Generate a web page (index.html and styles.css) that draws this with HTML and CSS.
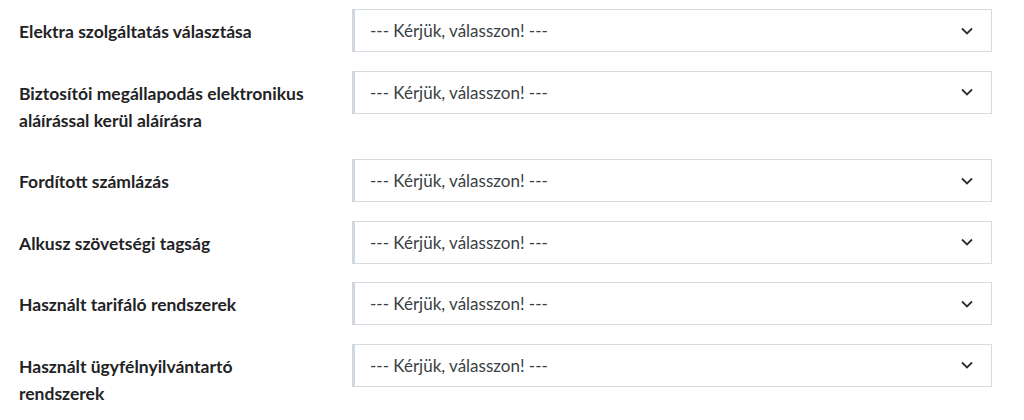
FILE: index.html
```html
<!DOCTYPE html>
<html lang="hu">
<head>
  <meta charset="UTF-8" />
  <meta name="viewport" content="width=device-width, initial-scale=1.0" />
  <title>Beállítások</title>
  <link rel="stylesheet" href="styles.css">
</head>
<body>
  <form class="settings">
    <div class="row">
      <label class="label">Elektra szolgáltatás választása</label>
      <div class="select"><span>--- Kérjük, válasszon! ---</span><svg class="chev" width="12" height="8" viewBox="0 0 12 8"><path d="M1 1.5l5 5 5-5" fill="none" stroke="#2b2f33" stroke-width="1.8"/></svg></div>
    </div>
    <div class="row">
      <label class="label">Biztosítói megállapodás elektronikus aláírással kerül aláírásra</label>
      <div class="select"><span>--- Kérjük, válasszon! ---</span><svg class="chev" width="12" height="8" viewBox="0 0 12 8"><path d="M1 1.5l5 5 5-5" fill="none" stroke="#2b2f33" stroke-width="1.8"/></svg></div>
    </div>
    <div class="row">
      <label class="label">Fordított számlázás</label>
      <div class="select"><span>--- Kérjük, válasszon! ---</span><svg class="chev" width="12" height="8" viewBox="0 0 12 8"><path d="M1 1.5l5 5 5-5" fill="none" stroke="#2b2f33" stroke-width="1.8"/></svg></div>
    </div>
    <div class="row">
      <label class="label">Alkusz szövetségi tagság</label>
      <div class="select"><span>--- Kérjük, válasszon! ---</span><svg class="chev" width="12" height="8" viewBox="0 0 12 8"><path d="M1 1.5l5 5 5-5" fill="none" stroke="#2b2f33" stroke-width="1.8"/></svg></div>
    </div>
    <div class="row">
      <label class="label">Használt tarifáló rendszerek</label>
      <div class="select"><span>--- Kérjük, válasszon! ---</span><svg class="chev" width="12" height="8" viewBox="0 0 12 8"><path d="M1 1.5l5 5 5-5" fill="none" stroke="#2b2f33" stroke-width="1.8"/></svg></div>
    </div>
    <div class="row">
      <label class="label">Használt ügyfélnyilvántartó rendszerek</label>
      <div class="select"><span>--- Kérjük, válasszon! ---</span><svg class="chev" width="12" height="8" viewBox="0 0 12 8"><path d="M1 1.5l5 5 5-5" fill="none" stroke="#2b2f33" stroke-width="1.8"/></svg></div>
    </div>
  </form>
</body>
</html>
```

FILE: styles.css
```css
body {
  margin: 0;
  padding: 9px 32px 0 19px;
  background: #fff;
  font-family: Lato, 'Noto Sans', sans-serif;
  color: #212529;
}

.settings {
  display: flex;
  flex-direction: column;
  gap: 16.5px;
}

.row {
  display: grid;
  grid-template-columns: 333px 1fr;
  align-items: start;
}

.label {
  padding: 9px 37px 9px 0;
  font-size: 17.5px;
  font-weight: 700;
  line-height: 27px;
  color: #1f2326;
}

.select {
  display: flex;
  align-items: center;
  justify-content: space-between;
  height: 43px;
  box-sizing: border-box;
  padding: 0 18px 0 15px;
  border: 1px solid #d5dbe1;
  border-left: 3px solid #d0d7df;
  font-size: 17px;
  color: #3a3f44;
}

.chev {
  display: block;
}
```
